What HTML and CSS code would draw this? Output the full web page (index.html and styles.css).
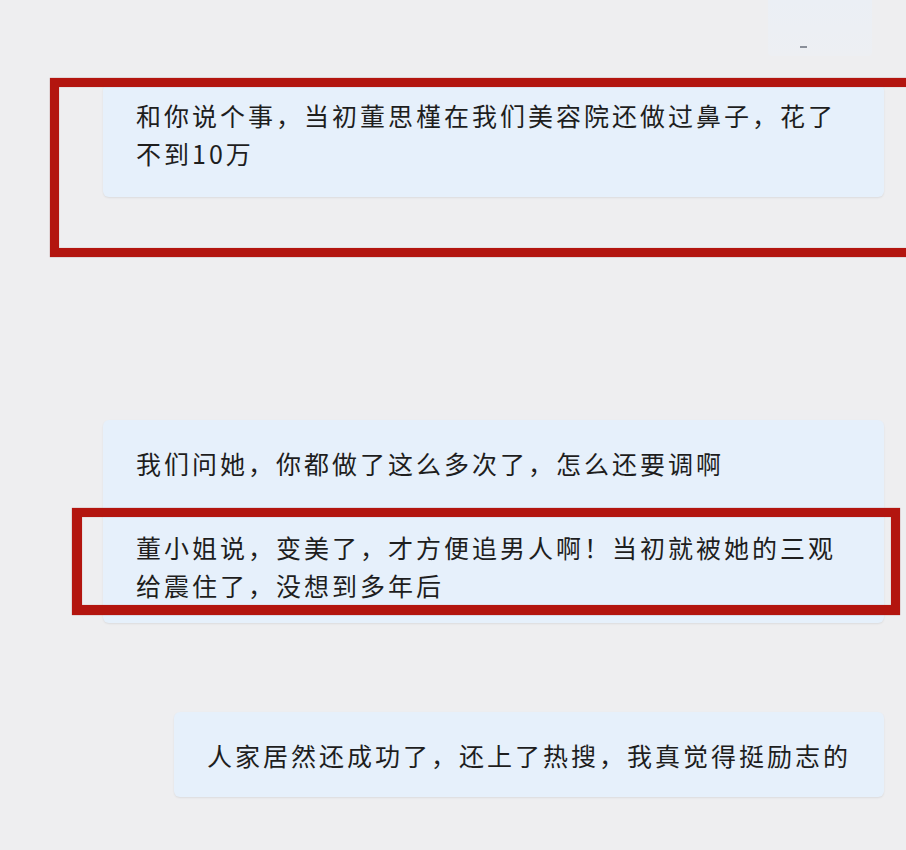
FILE: index.html
```html
<!DOCTYPE html>
<html lang="zh-CN">
<head>
  <meta charset="UTF-8" />
  <title>聊天记录</title>
  <meta name="viewport" content="width=device-width, initial-scale=1" />
  <link rel="stylesheet" href="styles.css">
</head>
<body>

  <div class="chat">
    <div class="remnant"><span class="dash"></span></div>

    <div class="msg msg-first">
      <div class="bubble">
        <p>和你说个事，当初董思槿在我们美容院还做过鼻子，花了不到10万</p>
      </div>
      <div class="mark mark-wide"></div>
    </div>

    <div class="msg msg-second">
      <div class="bubble">
        <p>我们问她，你都做了这么多次了，怎么还要调啊</p>
        <p class="gap">董小姐说，变美了，才方便追男人啊！当初就被她的三观给震住了，没想到多年后</p>
        <div class="mark mark-quote"></div>
      </div>
    </div>

    <div class="msg msg-self">
      <div class="bubble">
        <p>人家居然还成功了，还上了热搜，我真觉得挺励志的</p>
      </div>
    </div>
  </div>

</body>
</html>
```

FILE: styles.css
```css
:root {
  --bg: #eeeef0;
  --bubble: #e6f0fb;
  --text: #1e1e1e;
  --mark: #b3150f;
}

body {
  margin: 0;
  background: var(--bg);
  font-family: "Noto Sans CJK SC", "Noto Sans", sans-serif;
  color: var(--text);
  overflow: hidden;
}

.chat {
  display: flex;
  flex-direction: column;
  padding: 0 22px 0 103px;
  height: 850px;
  position: relative;
}

/* faint bottom edge of an earlier bubble, cut off by the screenshot */
.remnant {
  align-self: flex-end;
  width: 104px;
  height: 56px;
  margin-right: 12px;
  margin-bottom: 28px;
  background: linear-gradient(#ebeff5, #edeff3);
  border-radius: 0 0 4px 4px;
  position: relative;
}

.dash {
  position: absolute;
  left: 32px;
  top: 46px;
  width: 7px;
  height: 2px;
  background: #8a8f99;
}

.msg {
  position: relative;
  display: flex;
  flex-direction: column;
}

.bubble {
  background: var(--bubble);
  border-radius: 6px;
  box-shadow: 0 1px 2px rgba(0, 0, 0, 0.08);
  padding: 24px 33px 19px;
  position: relative;
}

.bubble p {
  margin: 0;
  font-size: 25px;
  line-height: 38px;
  letter-spacing: 3px;
}

.bubble p.gap {
  margin-top: 46px;
}

.msg-first .bubble {
  padding: 12px 33px 25px;
}

.msg-second {
  margin-top: 223px;
}

.msg-self {
  margin-top: 89px;
  align-self: flex-end;
}

.msg-self .bubble {
  padding: 24px 33px 23px;
}

/* red highlight frames drawn over the screenshot */
.mark {
  position: absolute;
  box-sizing: border-box;
  border: 9px solid var(--mark);
  box-shadow: 0 0 1px rgba(120, 0, 0, 0.6), inset 0 0 1px rgba(120, 0, 0, 0.6);
  pointer-events: none;
}

.mark-wide {
  top: -6px;
  left: -53px;
  right: -40px;
  height: 179px;
}

.mark-quote {
  top: 88px;
  left: -31px;
  width: 828px;
  height: 107px;
  border-width: 9px 9px 10px 10px;
}
```
